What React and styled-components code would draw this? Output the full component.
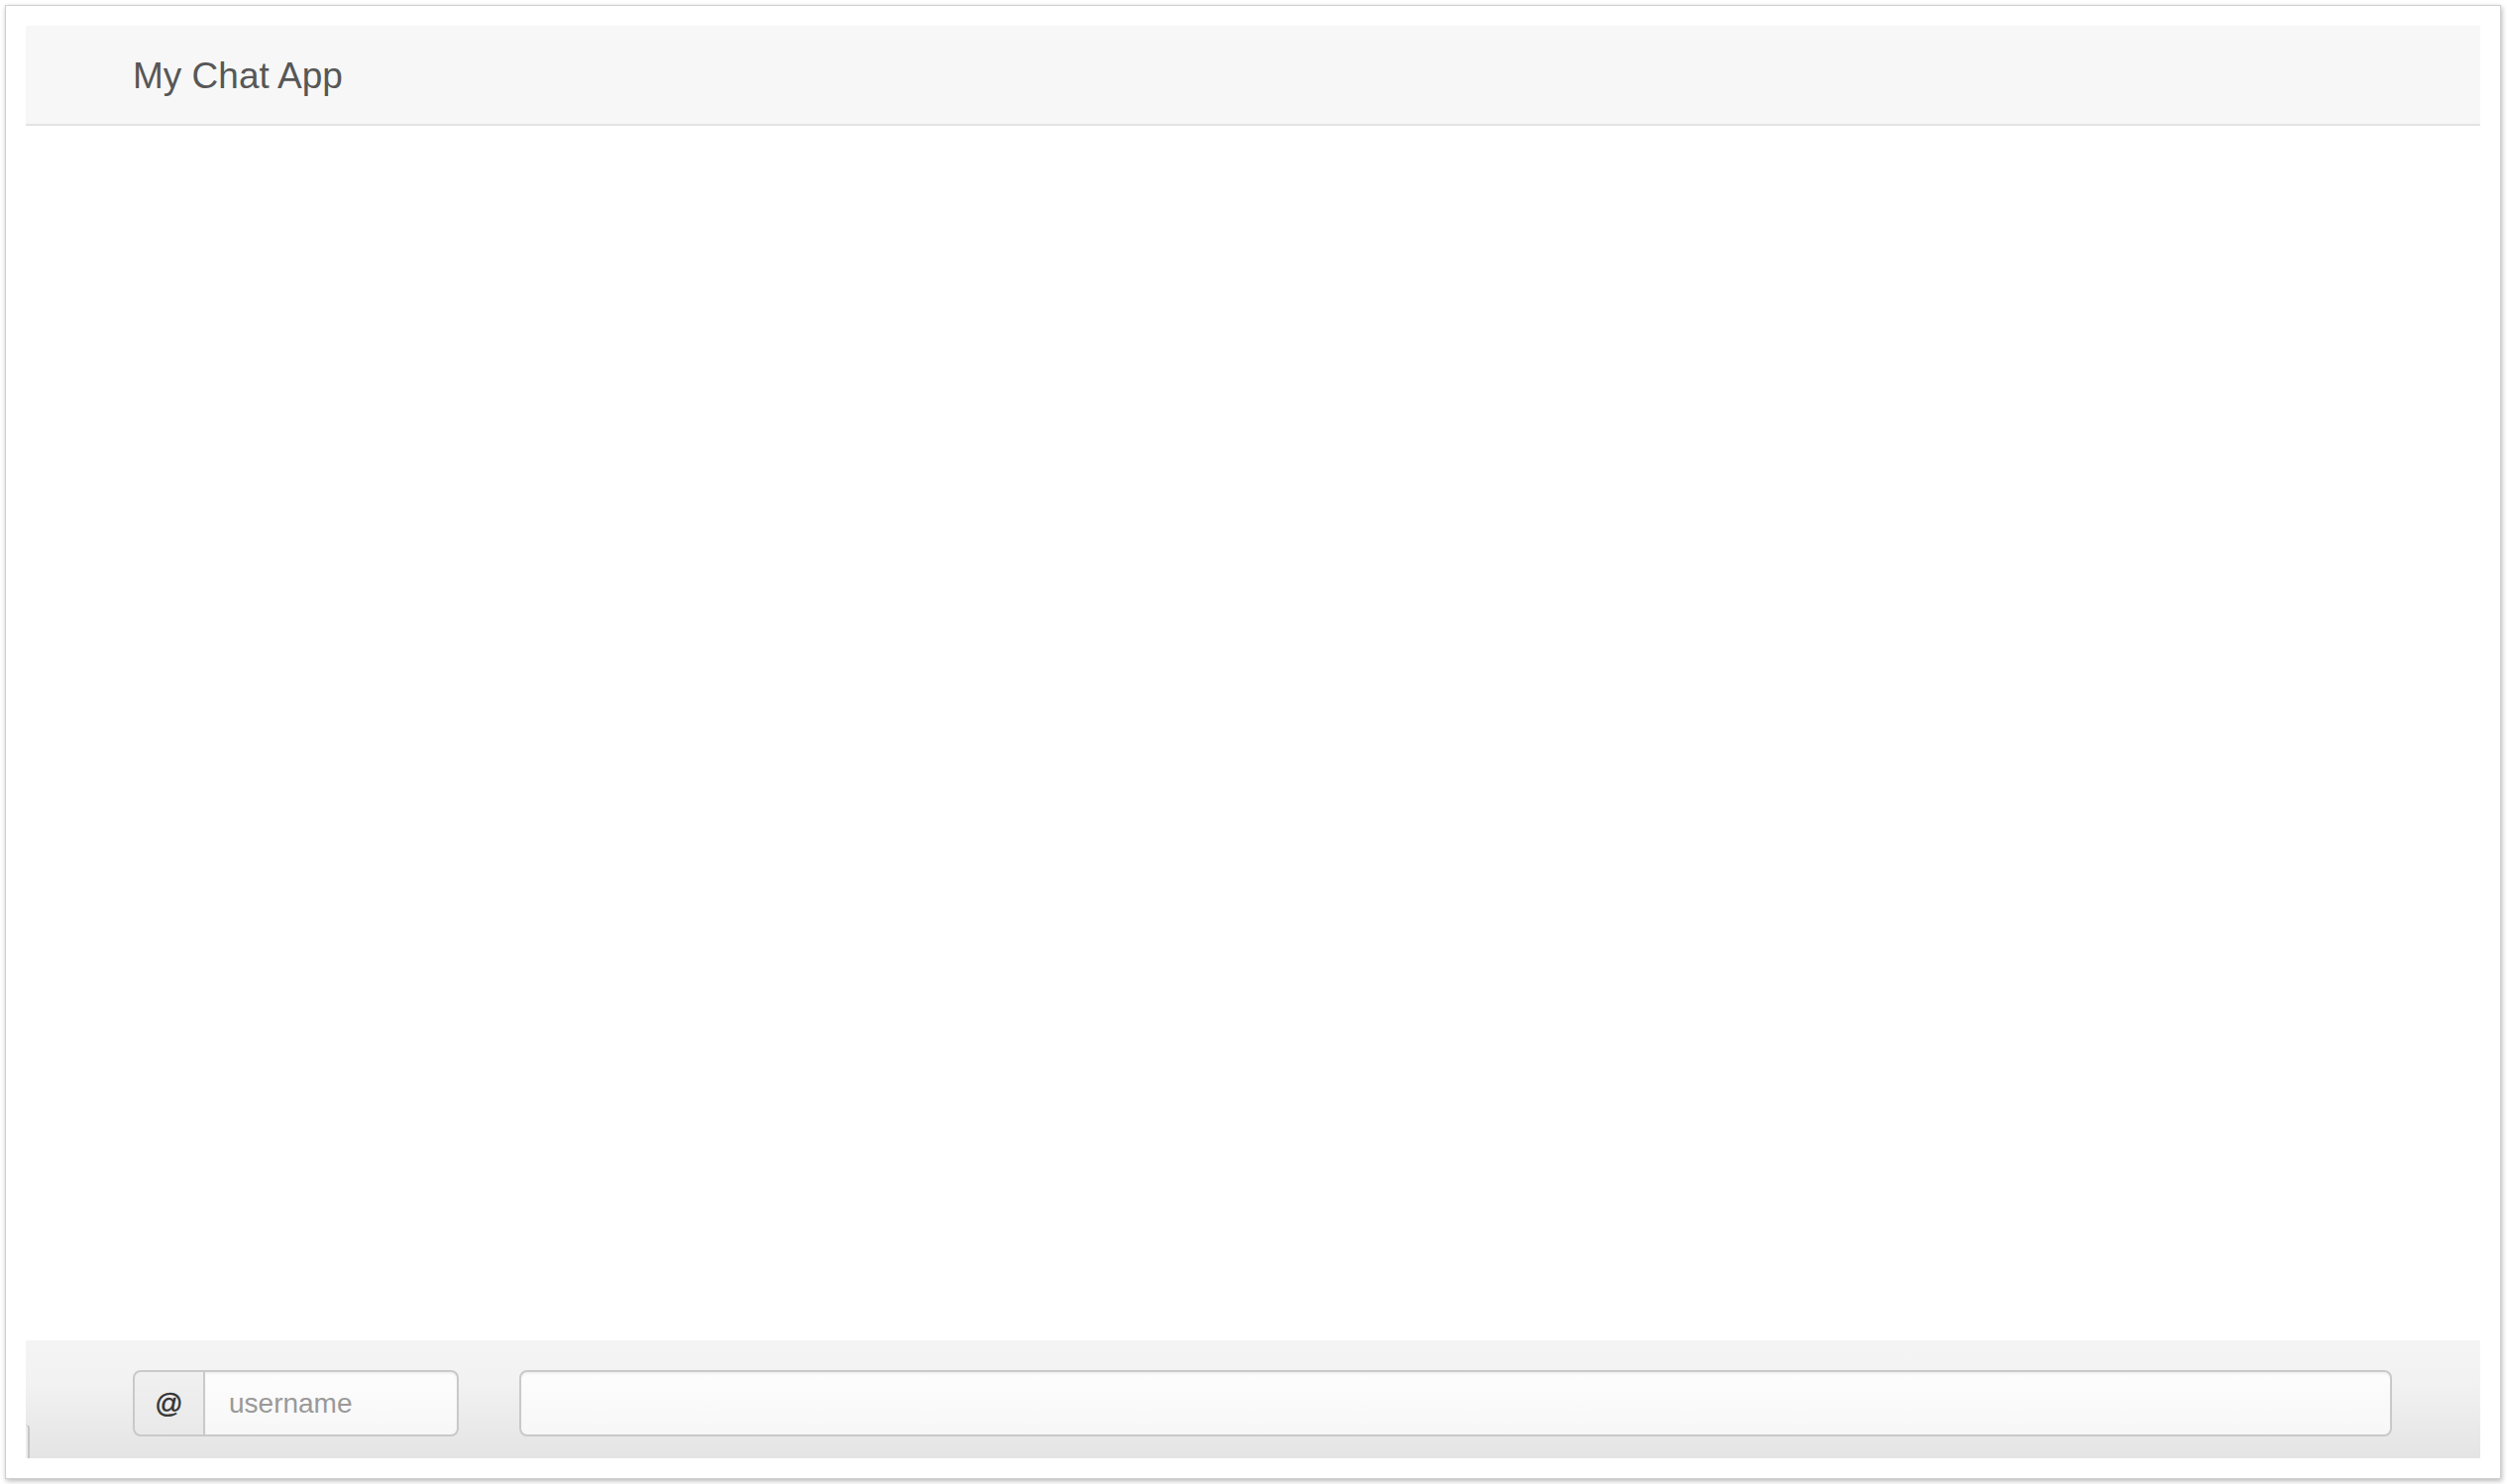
import React from 'react';
import styled, { createGlobalStyle } from 'styled-components';

const GlobalStyle = createGlobalStyle`
  html, body, #root {
    height: 100%;
  }
  body {
    margin: 0;
    background: #ffffff;
    font-family: "Liberation Sans", Arial, sans-serif;
  }
  #root {
    box-sizing: border-box;
    padding: 5px 6px 5px 5px;
  }
`;

const Window = styled.div`
  box-sizing: border-box;
  height: 100%;
  display: flex;
  flex-direction: column;
  padding: 20px;
  background: #ffffff;
  border: 1px solid #cfcfcf;
  box-shadow: 1px 2px 5px rgba(0, 0, 0, 0.28);
`;

const Navbar = styled.header`
  height: 99px;
  flex: none;
  display: flex;
  align-items: center;
  padding-left: 108px;
  background: #f7f7f7;
  border-bottom: 2px solid #e3e3e3;
`;

const Brand = styled.a`
  font-size: 37px;
  color: #575757;
  text-decoration: none;
  margin-top: 3px;
`;

const Messages = styled.main`
  flex: 1;
  background: #ffffff;
`;

const Footer = styled.footer`
  position: relative;
  box-sizing: border-box;
  height: 119px;
  flex: none;
  display: flex;
  align-items: flex-start;
  padding: 30px 89px 0 108px;
  background: linear-gradient(#f4f4f4 0%, #f2f2f2 35%, #e4e4e4 100%);
`;

const Sliver = styled.span`
  position: absolute;
  left: 0;
  bottom: 0;
  width: 2px;
  height: 33px;
  border-top: 1px solid #dcdcdc;
  border-right: 2px solid #c6c6c6;
  border-top-right-radius: 4px;
  background: #ededed;
`;

const InputGroup = styled.div`
  display: flex;
  width: 329px;
  height: 67px;
  flex: none;
`;

const Addon = styled.span`
  box-sizing: border-box;
  width: 73px;
  display: flex;
  align-items: center;
  justify-content: center;
  font-size: 28px;
  color: #333;
  -webkit-text-stroke: 0.4px #333;
  background: linear-gradient(#f0f0f0, #e9e9e9);
  border: 2px solid #c9c9c9;
  border-radius: 8px 0 0 8px;
`;

const Field = styled.input`
  box-sizing: border-box;
  height: 67px;
  min-width: 0;
  padding: 0 24px;
  font-family: "Liberation Sans", Arial, sans-serif;
  font-size: 28px;
  color: #555;
  background: linear-gradient(#fdfdfd, #f7f7f7);
  border: 2px solid #c9c9c9;
  border-radius: ${p => (p.$joined ? '0 8px 8px 0' : '8px')};
  border-left-width: ${p => (p.$joined ? '0' : '2px')};
  box-shadow: inset 0 2px 2px rgba(0, 0, 0, 0.05);
  outline: none;
  flex: 1;
  &::placeholder {
    color: #999999;
  }
`;

const MessageBox = styled.div`
  flex: 1;
  display: flex;
  margin-left: 61px;
`;

export default function App() {
  return (
    <>
      <GlobalStyle />
      <Window>
        <Navbar>
          <Brand href="#">My Chat App</Brand>
        </Navbar>
        <Messages />
        <Footer>
          <Sliver />
          <InputGroup>
            <Addon>@</Addon>
            <Field $joined type="text" placeholder="username" />
          </InputGroup>
          <MessageBox>
            <Field type="text" />
          </MessageBox>
        </Footer>
      </Window>
    </>
  );
}
